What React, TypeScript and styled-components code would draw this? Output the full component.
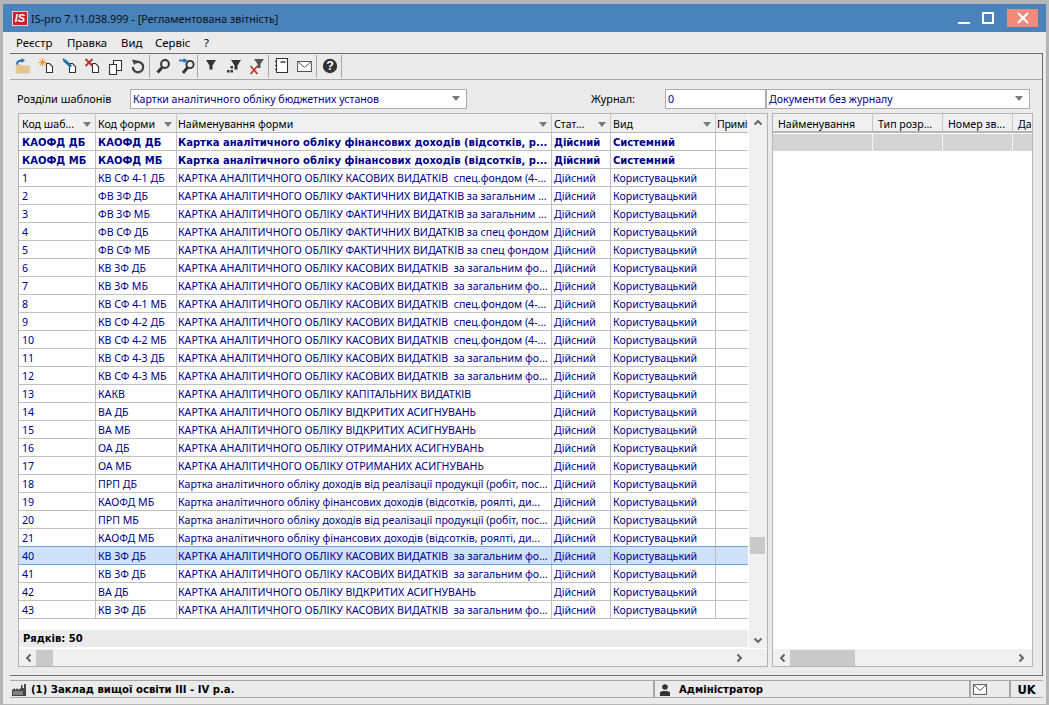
import React from 'react'
import styled, { createGlobalStyle } from 'styled-components'

const GlobalStyle = createGlobalStyle`
  html, body { margin: 0; padding: 0; height: 705px; overflow: hidden; background: #b4b4b4; }
  body { font-family: "Noto Sans", sans-serif; font-size: 10.6px; color: #000; }
  * { box-sizing: border-box; }
`

const NAVY = '#000088'
const BOLD_FONT = '"DejaVu Sans", sans-serif'

const Page = styled.div`
  width: 1049px;
  height: 705px;
  padding: 4px 3px 1px 3px;
`

const Window = styled.div`
  height: 700px;
  background: #ebebeb;
  display: flex;
  flex-direction: column;
`

const TitleBar = styled.div`
  height: 28px;
  background: #4a82bc;
  display: flex;
  align-items: center;
  padding: 0 8px 0 9px;
`

const Logo = styled.span`
  width: 16px;
  height: 15px;
  background: #c8202c;
  border: 1px solid #f4d0d0;
  color: #fff;
  font: italic bold 11px "Liberation Sans", sans-serif;
  text-align: center;
  line-height: 13px;
  margin-right: 3px;
`

const TitleText = styled.span`
  font-size: 10.8px;
  color: #0a1018;
  flex: 1;
`

const WinButton = styled.div<{ $close?: boolean }>`
  width: ${(p) => (p.$close ? '31px' : '24px')};
  height: 18px;
  margin-left: ${(p) => (p.$close ? '7px' : '0')};
  display: flex;
  align-items: center;
  justify-content: center;
  background: ${(p) => (p.$close ? '#f28b7b' : 'transparent')};
`

const MenuBar = styled.div`
  height: 21px;
  display: flex;
  align-items: center;
  padding-left: 13px;
`

const MenuItem = styled.span<{ $w: number }>`
  width: ${(p) => p.$w}px;
  font-size: 11.4px;
`

const Frame = styled.div`
  height: 623px;
  margin-left: 7px;
  margin-right: 3px;
  border-top: 1px solid #6e6e6e;
  border-bottom: 1px solid #6e6e6e;
  border-right: 1px solid #6e6e6e;
  display: flex;
  flex-direction: column;
`

const Toolbar = styled.div`
  height: 26px;
  display: flex;
  align-items: center;
  padding-left: 1px;
  border-bottom: 1px solid #a8a8a8;
`

const ToolSlot = styled.div`
  width: 23px;
  height: 20px;
  display: flex;
  align-items: center;
  justify-content: center;
`

const ToolSep = styled.div`
  width: 1px;
  height: 23px;
  background: #a8a8a8;
  margin-right: 1px;
`

const FilterRow = styled.div`
  height: 33px;
  display: flex;
  align-items: center;
  padding: 4px 0 0 7px;
`

const FieldLabel = styled.span<{ $w: number; $ml?: number }>`
  width: ${(p) => p.$w}px;
  margin-left: ${(p) => p.$ml ?? 0}px;
  font-size: 10.9px;
  margin-top: -1px;
`

const Field = styled.div<{ $w: number }>`
  width: ${(p) => p.$w}px;
  height: 20px;
  background: #fff;
  border: 1px solid #adadad;
  color: ${NAVY};
  padding: 0 2px;
  display: flex;
  align-items: center;
  justify-content: space-between;
`

const DownMark = styled.i`
  width: 0;
  height: 0;
  margin-right: 4px;
  flex: none;
  border-left: 4px solid transparent;
  border-right: 4px solid transparent;
  border-top: 5px solid #7a7a7a;
`

const Panels = styled.div`
  display: flex;
  gap: 4px;
  margin: 0 0 0 8px;
`

const Panel = styled.div<{ $w: number }>`
  width: ${(p) => p.$w}px;
  height: 554px;
  background: #fff;
  border: 1px solid #b4b4b4;
  display: flex;
  flex-direction: column;
`

const PanelBody = styled.div`
  height: 534px;
  display: flex;
`

const GridArea = styled.div`
  width: 729px;
  display: flex;
  flex-direction: column;
`

const COLUMNS = '77px 81px 375px 59px 105px 32px'

const HeadRow = styled.div`
  display: grid;
  grid-template-columns: ${COLUMNS};
  height: 19px;
  background: #f0f0f0;
  border-bottom: 1px solid #b8b8b8;
`

const HeadCell = styled.div`
  display: flex;
  align-items: center;
  justify-content: space-between;
  padding: 2px 0 0 2px;
  border-right: 1px solid #c8c8c8;
  overflow: hidden;
  white-space: nowrap;
  &:first-child { padding-left: 3px; }
  &:nth-child(3) { padding-left: 1px; }
  &:last-child { border-right: 0; padding-left: 1px; letter-spacing: -0.3px; }
`

const DataRow = styled.div<{ $selected?: boolean }>`
  display: grid;
  grid-template-columns: ${COLUMNS};
  height: 18px;
  color: ${NAVY};
  background: ${(p) => (p.$selected ? '#cde2fa' : '#fff')};
  border-bottom: 1px solid ${(p) => (p.$selected ? '#6fa3d8' : '#c0c0c0')};
  box-shadow: ${(p) => (p.$selected ? '0 -1px 0 #6fa3d8' : 'none')};
`

const DataCell = styled.div<{ $bold?: boolean }>`
  padding-left: 2px;
  line-height: 19px;
  border-right: 1px solid #c0c0c0;
  overflow: hidden;
  white-space: pre;
  font-family: ${(p) => (p.$bold ? BOLD_FONT : 'inherit')};
  font-size: ${(p) => (p.$bold ? '10px' : '10.6px')};
  font-weight: ${(p) => (p.$bold ? 700 : 400)};
  &:first-child { padding-left: 3px; }
  &:nth-child(3) { padding-left: 1px; }
  &:last-child { border-right: 0; }
`

const BlankGap = styled.div`
  height: 11px;
`

const Footer = styled.div`
  height: 17px;
  background: #ebebeb;
  font: 700 10px/18px ${BOLD_FONT};
  padding-left: 4px;
`

const VScroll = styled.div`
  width: 18px;
  margin-left: 1px;
  background: #f0f0f0;
  display: flex;
  flex-direction: column;
  align-items: center;
  padding: 2px 0 1px;
`

const ArrowSlot = styled.div`
  height: 14px;
  display: flex;
  align-items: center;
  justify-content: center;
  flex: none;
`

const VTrack = styled.div`
  flex: 1;
  width: 100%;
  padding: 407px 2px 0 1px;
`

const VThumb = styled.div`
  height: 17px;
  background: #c9c9c9;
`

const HScroll = styled.div<{ $end: number }>`
  height: 18px;
  border-top: 1px solid #fff;
  background: #f0f0f0;
  display: flex;
  align-items: center;
  padding: 0 ${(p) => p.$end}px 0 3px;
`

const HArrow = styled.div`
  width: 14px;
  display: flex;
  justify-content: center;
  flex: none;
`

const HTrack = styled.div`
  flex: 1;
  height: 16px;
`

const HThumb = styled.div<{ $w: number }>`
  width: ${(p) => p.$w}px;
  height: 16px;
  background: #c9c9c9;
`

const SideHead = styled.div`
  display: grid;
  grid-template-columns: 100px 70px 70px 18px;
  height: 19px;
  background: #f0f0f0;
  border-bottom: 2px solid #b4b4b4;
`

const SideHeadCell = styled.div`
  padding-left: 5px;
  line-height: 20px;
  border-right: 1px solid #c8c8c8;
  overflow: hidden;
  white-space: nowrap;
  &:last-child { border-right: 0; }
`

const SideRow = styled.div`
  display: grid;
  grid-template-columns: 100px 70px 70px 18px;
  height: 17px;
  margin-top: 1px;
  background: #d4d4d4;
`

const SideRowCell = styled.div`
  border-right: 1px solid #f4f4f4;
  &:last-child { border-right: 0; }
`

const SideBody = styled.div`
  height: 534px;
`

const StatusBar = styled.div`
  height: 18px;
  margin: 4px 3px 0 7px;
  border-top: 1px solid #a8a8a8;
  border-bottom: 1px solid #a8a8a8;
  display: flex;
  font: 700 10.1px ${BOLD_FONT};
`

const StatusCell = styled.div<{ $w: number; $center?: boolean }>`
  width: ${(p) => p.$w}px;
  display: flex;
  align-items: center;
  justify-content: ${(p) => (p.$center ? 'center' : 'flex-start')};
  gap: 4px;
  padding-left: ${(p) => (p.$center ? 0 : 1)}px;
  padding-top: 1px;
  border-right: 2px solid #a8a8a8;
  white-space: nowrap;
  &:last-child { border-right: 0; }
`

const UserIconBox = styled.span`
  display: flex;
  margin-left: 4px;
  margin-right: 5px;
`

const MailBox = styled.span`
  display: flex;
  margin-left: 1px;
`

const LangText = styled.span`
  font-size: 11.5px;
`

const Icon = ({ children }: { children: React.ReactNode }) => (
  <svg width="18" height="18" viewBox="0 0 18 18">{children}</svg>
)

const IconOpen = () => (
  <Icon>
    <path d="M2 6h4l1.5 1.5H16V15.5H2z" fill="#e6c48e" stroke="#d8d8d8" strokeWidth=".6" />
    <path d="M3 6.5C3 3.5 5 2.5 8 2.5" fill="none" stroke="#1c6fc4" strokeWidth="1.9" />
    <path d="M7.5 0l3.5 2.5-3.5 2.5z" fill="#1c6fc4" />
  </Icon>
)

const DocOutline = () => <path d="M9.5 5.5h3l3 3v6h-6z" fill="#fff" stroke="#333" strokeWidth="1.1" />

const IconNew = () => (
  <Icon>
    <DocOutline />
    <path d="M5.5 .5v8M1.5 4.5h8M2.7 1.7l5.6 5.6M8.3 1.7L2.7 7.3" stroke="#e89a20" strokeWidth="1" />
  </Icon>
)

const IconEdit = () => (
  <Icon>
    <DocOutline />
    <path d="M4 2l7 6.5" stroke="#1c6fa8" strokeWidth="3" />
    <path d="M2.5 .5l2 .5-1.2 1.4z" fill="#123" />
  </Icon>
)

const IconDelete = () => (
  <Icon>
    <DocOutline />
    <path d="M2.5 1l7 7M9.5 1l-7 7" stroke="#b83426" strokeWidth="1.9" />
  </Icon>
)

const IconCopy = () => (
  <Icon>
    <path d="M7.5 2.5h8v10h-8z" fill="#fff" stroke="#333" strokeWidth="1.1" />
    <path d="M3.5 6.5h7v10h-7z" fill="#fff" stroke="#333" strokeWidth="1.1" />
  </Icon>
)

const IconUndo = () => (
  <Icon>
    <path d="M6 4.8A5.2 5.2 0 1 1 3.8 9" fill="none" stroke="#444" strokeWidth="2.3" />
    <path d="M3 1.5l5.5 1-3.4 4.4z" fill="#444" />
  </Icon>
)

const IconSearch = () => (
  <Icon>
    <circle cx="11" cy="6" r="3.9" fill="none" stroke="#333" strokeWidth="2" />
    <path d="M8 9.5L3.5 14.5" stroke="#333" strokeWidth="3" />
  </Icon>
)

const IconSearchNext = () => (
  <Icon>
    <circle cx="13" cy="6.5" r="3.6" fill="none" stroke="#333" strokeWidth="1.9" />
    <path d="M10.5 9.5L6 15" stroke="#333" strokeWidth="2.8" />
    <path d="M2 2.5h5" stroke="#1c6fc4" strokeWidth="1.8" />
    <path d="M6.5 0l4 2.5-4 2.5z" fill="#1c6fc4" />
  </Icon>
)

const IconFilter = () => (
  <Icon>
    <path d="M4 2h10L10.5 7.5V11.5h-3V7.5z" fill="#333" />
  </Icon>
)

const IconFilterDots = () => (
  <Icon>
    <path d="M6 2h10l-3.5 5.5V11.5h-3V7.5z" fill="#333" />
    <path d="M5.5 8H8v2.5H5.5zM2 12h2.5v2.5H2zM5.5 12H8v2.5H5.5z" fill="#333" />
  </Icon>
)

const IconFilterOff = () => (
  <Icon>
    <path d="M6 1h10l-3.5 5v4h-3V6z" fill="#555" />
    <path d="M2.5 8l7 8M9.5 8l-7 8" stroke="#b83426" strokeWidth="1.7" />
  </Icon>
)

const IconNote = () => (
  <Icon>
    <path d="M3.5 .5h11v14h-11z" fill="#fff" stroke="#333" strokeWidth="1.1" />
    <path d="M7.5 4h5" stroke="#333" strokeWidth="1.4" />
    <path d="M2.5 3v1M2.5 7v1M2.5 11v1" stroke="#333" />
  </Icon>
)

const IconMail = ({ w = 15, h = 11 }: { w?: number; h?: number }) => (
  <svg width={w} height={h} viewBox="0 0 16 12">
    <rect x=".5" y=".5" width="15" height="11" fill="#fff" stroke="#444" />
    <path d="M1 1l7 6 7-6" fill="none" stroke="#444" />
  </svg>
)

const IconHelp = () => (
  <Icon>
    <circle cx="9" cy="8" r="7.2" fill="#333" />
    <text x="9" y="12.4" textAnchor="middle" fontSize="12.5" fontWeight="700" fontFamily="Liberation Sans" fill="#fff">?</text>
  </Icon>
)

const IconFactory = () => (
  <svg width="16" height="12" viewBox="0 0 16 12">
    <path d="M1 12V6l3-2v2l3-2v2l3-2V1h1.5v3H13V0h2v12z" fill="#444" />
    <path d="M3 7v4M5 7v4M7 7v4M9 7v4M11 7v4" stroke="#ddd" strokeWidth=".8" />
  </svg>
)

const IconUser = () => (
  <svg width="10" height="12" viewBox="0 0 10 12">
    <circle cx="5" cy="3" r="2.8" fill="#333" />
    <path d="M0 12V8l3-1h4l3 1v4z" fill="#333" />
  </svg>
)

type Dir = 'up' | 'down' | 'left' | 'right'
const chevrons: Record<Dir, string> = {
  up: 'M1.5 6.5L5 3l3.5 3.5',
  down: 'M1.5 3.5L5 7l3.5-3.5',
  left: 'M6.5 1.5L3 5l3.5 3.5',
  right: 'M3.5 1.5L7 5 3.5 8.5',
}
const Chevron = ({ dir }: { dir: Dir }) => (
  <svg width="10" height="10" viewBox="0 0 10 10">
    <path d={chevrons[dir]} fill="none" stroke="#606060" strokeWidth="1.9" />
  </svg>
)

const CASH = 'КАРТКА АНАЛІТИЧНОГО ОБЛІКУ КАСОВИХ ВИДАТКІВ'
const FACT = 'КАРТКА АНАЛІТИЧНОГО ОБЛІКУ ФАКТИЧНИХ ВИДАТКІВ'
const INCOME = 'Картка аналітичного обліку фінансових доходів (відсотків, р...'

const rows: [string, string, string][] = [
  ['КАОФД ДБ', 'КАОФД ДБ', INCOME],
  ['КАОФД МБ', 'КАОФД МБ', INCOME],
  ['1', 'КВ СФ 4-1 ДБ', `${CASH}  спец.фондом (4-...`],
  ['2', 'ФВ ЗФ ДБ', `${FACT} за загальним ...`],
  ['3', 'ФВ ЗФ МБ', `${FACT} за загальним ...`],
  ['4', 'ФВ СФ ДБ', `${FACT} за спец фондом`],
  ['5', 'ФВ СФ МБ', `${FACT} за спец фондом`],
  ['6', 'КВ ЗФ ДБ', `${CASH}  за загальним фо...`],
  ['7', 'КВ ЗФ МБ', `${CASH}  за загальним фо...`],
  ['8', 'КВ СФ 4-1 МБ', `${CASH}  спец.фондом (4-...`],
  ['9', 'КВ СФ 4-2 ДБ', `${CASH}  спец.фондом (4-...`],
  ['10', 'КВ СФ 4-2 МБ', `${CASH}  спец.фондом (4-...`],
  ['11', 'КВ СФ 4-3 ДБ', `${CASH}  за загальним фо...`],
  ['12', 'КВ СФ 4-3 МБ', `${CASH}  за загальним фо...`],
  ['13', 'КАКВ', 'КАРТКА АНАЛІТИЧНОГО ОБЛІКУ КАПІТАЛЬНИХ ВИДАТКІВ'],
  ['14', 'ВА ДБ', 'КАРТКА АНАЛІТИЧНОГО ОБЛІКУ ВІДКРИТИХ АСИГНУВАНЬ'],
  ['15', 'ВА МБ', 'КАРТКА АНАЛІТИЧНОГО ОБЛІКУ ВІДКРИТИХ АСИГНУВАНЬ'],
  ['16', 'ОА ДБ', 'КАРТКА АНАЛІТИЧНОГО ОБЛІКУ ОТРИМАНИХ АСИГНУВАНЬ'],
  ['17', 'ОА МБ', 'КАРТКА АНАЛІТИЧНОГО ОБЛІКУ ОТРИМАНИХ АСИГНУВАНЬ'],
  ['18', 'ПРП ДБ', 'Картка аналітичного обліку доходів від реалізації продукції (робіт, пос...'],
  ['19', 'КАОФД МБ', 'Картка аналітичного обліку фінансових доходів (відсотків, роялті, ди...'],
  ['20', 'ПРП МБ', 'Картка аналітичного обліку доходів від реалізації продукції (робіт, пос...'],
  ['21', 'КАОФД МБ', 'Картка аналітичного обліку фінансових доходів (відсотків, роялті, ди...'],
  ['40', 'КВ ЗФ ДБ', `${CASH}  за загальним фо...`],
  ['41', 'КВ ЗФ ДБ', `${CASH}  за загальним фо...`],
  ['42', 'ВА ДБ', 'КАРТКА АНАЛІТИЧНОГО ОБЛІКУ ВІДКРИТИХ АСИГНУВАНЬ'],
  ['43', 'КВ ЗФ ДБ', `${CASH}  за загальним фо...`],
]

const headers = ['Код шаб...', 'Код форми', 'Найменування форми', 'Стат...', 'Вид']

const App = () => (
  <Page>
    <GlobalStyle />
    <Window>
      <TitleBar>
        <Logo>IS</Logo>
        <TitleText>IS-pro 7.11.038.999 - [Регламентована звітність]</TitleText>
        <WinButton>
          <svg width="12" height="12" viewBox="0 0 12 12"><path d="M0 11h12" stroke="#fff" strokeWidth="2" /></svg>
        </WinButton>
        <WinButton>
          <svg width="12" height="12" viewBox="0 0 12 12"><rect x="1" y="1" width="10" height="10" fill="none" stroke="#fff" strokeWidth="2" /></svg>
        </WinButton>
        <WinButton $close>
          <svg width="12" height="12" viewBox="0 0 12 12"><path d="M1 1l10 10M11 1L1 11" stroke="#fff" strokeWidth="2" /></svg>
        </WinButton>
      </TitleBar>

      <MenuBar>
        <MenuItem $w={51}>Реєстр</MenuItem>
        <MenuItem $w={54}>Правка</MenuItem>
        <MenuItem $w={34}>Вид</MenuItem>
        <MenuItem $w={49}>Сервіс</MenuItem>
        <MenuItem $w={12}>?</MenuItem>
      </MenuBar>

      <Frame>
        <Toolbar>
          <ToolSlot><IconOpen /></ToolSlot>
          <ToolSlot><IconNew /></ToolSlot>
          <ToolSlot><IconEdit /></ToolSlot>
          <ToolSlot><IconDelete /></ToolSlot>
          <ToolSlot><IconCopy /></ToolSlot>
          <ToolSlot><IconUndo /></ToolSlot>
          <ToolSep />
          <ToolSlot><IconSearch /></ToolSlot>
          <ToolSlot><IconSearchNext /></ToolSlot>
          <ToolSep />
          <ToolSlot><IconFilter /></ToolSlot>
          <ToolSlot><IconFilterDots /></ToolSlot>
          <ToolSlot><IconFilterOff /></ToolSlot>
          <ToolSep />
          <ToolSlot><IconNote /></ToolSlot>
          <ToolSlot><IconMail /></ToolSlot>
          <ToolSep />
          <ToolSlot><IconHelp /></ToolSlot>
          <ToolSep />
        </Toolbar>

        <FilterRow>
          <FieldLabel $w={113}>Розділи шаблонів</FieldLabel>
          <Field $w={337}>Картки аналітичного обліку бюджетних установ<DownMark /></Field>
          <FieldLabel $w={74} $ml={124}>Журнал:</FieldLabel>
          <Field $w={101}>0</Field>
          <Field $w={264}>Документи без журналу<DownMark /></Field>
        </FilterRow>

        <Panels>
          <Panel $w={750}>
            <PanelBody>
              <GridArea>
                <HeadRow>
                  {headers.map((h) => (
                    <HeadCell key={h}>{h}<DownMark /></HeadCell>
                  ))}
                  <HeadCell>Приміт</HeadCell>
                </HeadRow>
                {rows.map((r, i) => (
                  <DataRow key={r[0]} $selected={r[0] === '40'}>
                    <DataCell $bold={i < 2}>{r[0]}</DataCell>
                    <DataCell $bold={i < 2}>{r[1]}</DataCell>
                    <DataCell $bold={i < 2}>{r[2]}</DataCell>
                    <DataCell $bold={i < 2}>Дійсний</DataCell>
                    <DataCell $bold={i < 2}>{i < 2 ? 'Системний' : 'Користувацький'}</DataCell>
                    <DataCell />
                  </DataRow>
                ))}
                <BlankGap />
                <Footer>Рядків: 50</Footer>
              </GridArea>
              <VScroll>
                <ArrowSlot><Chevron dir="up" /></ArrowSlot>
                <VTrack><VThumb /></VTrack>
                <ArrowSlot><Chevron dir="down" /></ArrowSlot>
              </VScroll>
            </PanelBody>
            <HScroll $end={21}>
              <HArrow><Chevron dir="left" /></HArrow>
              <HTrack><HThumb $w={17} /></HTrack>
              <HArrow><Chevron dir="right" /></HArrow>
            </HScroll>
          </Panel>

          <Panel $w={261}>
            <SideBody>
              <SideHead>
                <SideHeadCell>Найменування</SideHeadCell>
                <SideHeadCell>Тип розр...</SideHeadCell>
                <SideHeadCell>Номер зв...</SideHeadCell>
                <SideHeadCell>Да</SideHeadCell>
              </SideHead>
              <SideRow>
                <SideRowCell />
                <SideRowCell />
                <SideRowCell />
                <SideRowCell />
              </SideRow>
            </SideBody>
            <HScroll $end={4}>
              <HArrow><Chevron dir="left" /></HArrow>
              <HTrack><HThumb $w={65} /></HTrack>
              <HArrow><Chevron dir="right" /></HArrow>
            </HScroll>
          </Panel>
        </Panels>
      </Frame>

      <StatusBar>
        <StatusCell $w={645}><IconFactory />(1) Заклад вищої освіти III - IV р.а.</StatusCell>
        <StatusCell $w={316}>
          <UserIconBox><IconUser /></UserIconBox>
          Адміністратор
        </StatusCell>
        <StatusCell $w={40}><MailBox><IconMail w={14} h={11} /></MailBox></StatusCell>
        <StatusCell $w={31} $center><LangText>UK</LangText></StatusCell>
      </StatusBar>
    </Window>
  </Page>
)

export default App
